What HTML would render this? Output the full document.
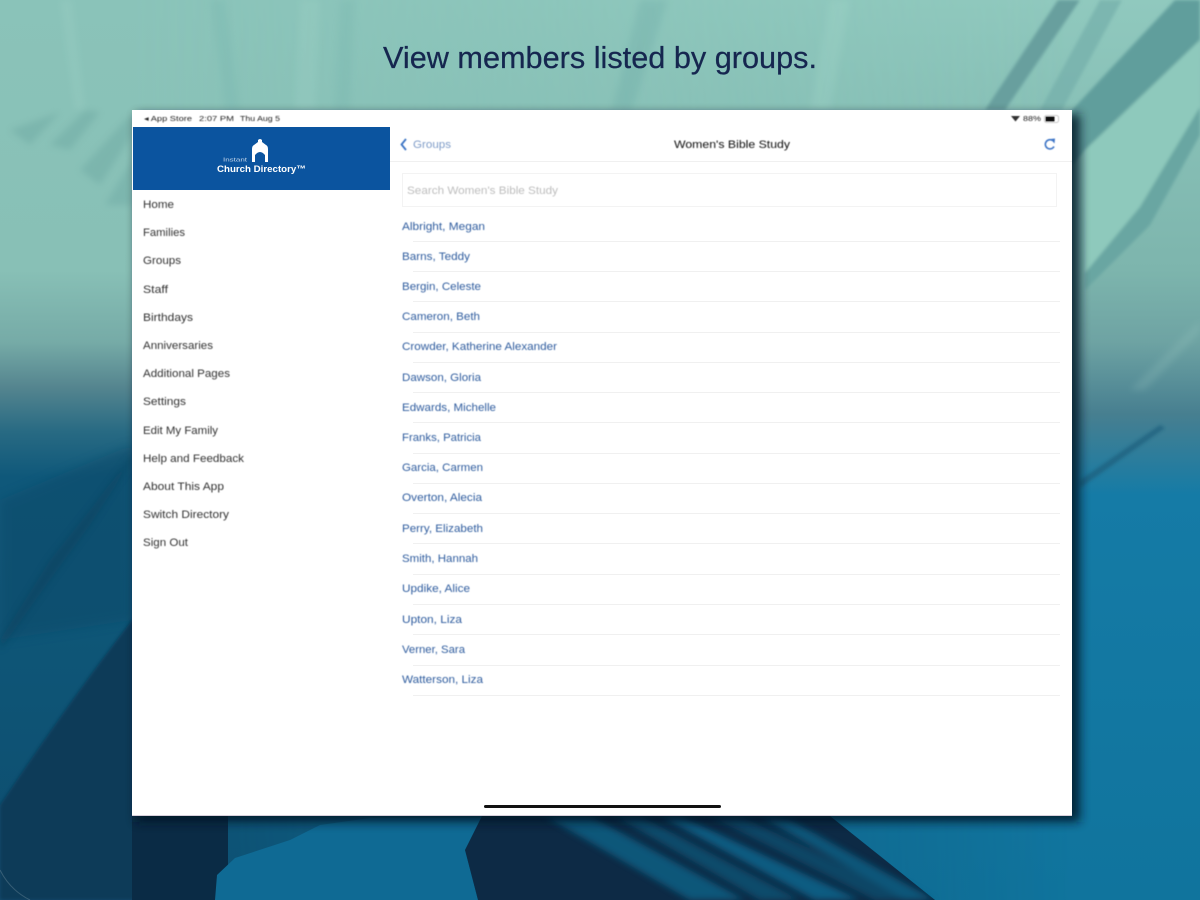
<!DOCTYPE html>
<html>
<head>
<meta charset="utf-8">
<style>
html,body{margin:0;padding:0;width:1200px;height:900px;overflow:hidden;background:#0f6a92}
svg{display:block}
text{font-family:"Liberation Sans",sans-serif}
</style>
</head>
<body>
<svg width="1200" height="900" viewBox="0 0 1200 900" xmlns="http://www.w3.org/2000/svg">
<defs>
<linearGradient id="bgL" x1="0" y1="0" x2="0" y2="1">
<stop offset="0" stop-color="#8ac3b9"/>
<stop offset=".3" stop-color="#88c0b6"/>
<stop offset=".38" stop-color="#76aba7"/>
<stop offset=".43" stop-color="#55858f"/>
<stop offset=".48" stop-color="#286a83"/>
<stop offset=".53" stop-color="#0f587a"/>
<stop offset=".7" stop-color="#0e5677"/>
<stop offset="1" stop-color="#0d4d6f"/>
</linearGradient>
<linearGradient id="bgR" x1="0" y1="0" x2="0" y2="1">
<stop offset="0" stop-color="#90c9be"/>
<stop offset=".3" stop-color="#7db5ad"/>
<stop offset=".38" stop-color="#6ea3a3"/>
<stop offset=".46" stop-color="#477f90"/>
<stop offset=".55" stop-color="#157ba6"/>
<stop offset="1" stop-color="#10749d"/>
</linearGradient>
<linearGradient id="hz">
<stop offset="0" stop-color="#fff"/>
<stop offset=".11" stop-color="#fff"/>
<stop offset=".89" stop-color="#000"/>
<stop offset="1" stop-color="#000"/>
</linearGradient>
<mask id="rightMask"><rect width="1200" height="900" fill="url(#hz)"/></mask>
<filter id="b1" x="-30%" y="-30%" width="160%" height="160%"><feGaussianBlur stdDeviation="1.5"/></filter>
<filter id="b3" x="-30%" y="-30%" width="160%" height="160%"><feGaussianBlur stdDeviation="3.5"/></filter>
<filter id="b5" x="-30%" y="-30%" width="160%" height="160%"><feGaussianBlur stdDeviation="5"/></filter>
<filter id="t" x="-5%" y="-30%" width="110%" height="160%"><feGaussianBlur stdDeviation="0.5"/></filter>
<filter id="t2" x="-5%" y="-30%" width="110%" height="160%"><feGaussianBlur stdDeviation="0.3"/></filter>
</defs>

<!-- background -->
<rect width="1200" height="900" fill="url(#bgR)"/>
<rect width="1200" height="900" fill="url(#bgL)" mask="url(#rightMask)"/>

<!-- vertical streaks, top -->
<g filter="url(#b3)" opacity=".22">
<path d="M60 0L75 110L85 110L72 0Z" fill="#a5d5ca"/>
<path d="M210 0L225 110L240 110L225 0Z" fill="#6fb0aa"/>
<path d="M300 0L295 110L315 110L320 0Z" fill="#a5d5ca"/>
<path d="M340 0L335 110L350 110L355 0Z" fill="#6fb0aa"/>
<path d="M640 0L612 110L632 110L668 0Z" fill="#5f9f9e"/>
<path d="M830 0L810 110L830 110L850 0Z" fill="#a8dbce"/>
</g>
<!-- diagonal strokes, top right -->
<g filter="url(#b1)">
<path d="M1058 0L985 110L1005 110L1080 0Z" fill="#679f9e"/>
<path d="M1100 0L1040 110L1062 110L1122 0Z" fill="#74aeaa" opacity=".7"/>
<path d="M1072 165L1085 150L1200 40L1200 0L1175 0L1072 110Z" fill="#609e9c"/>
<path d="M1085 150L1200 40L1200 107L1140 207L1085 273Z" fill="#8ec9bc"/>
<path d="M1085 273L1140 207L1200 107L1200 135L1150 225L1085 290Z" fill="#69a6a2"/>
</g>
<path d="M1080 480L1160 425L1165 428L1080 488Z" fill="#1f5f7d" opacity=".7" filter="url(#b1)"/>
<path d="M1130 390L1200 320L1200 332L1145 390Z" fill="#a8d4cb" opacity=".18" filter="url(#b3)"/>

<!-- left top diagonal strokes -->
<g filter="url(#b3)" opacity=".4">
<path d="M10 130L60 112L30 145Z" fill="#69a49f"/>
<path d="M50 145L85 110L100 112L70 150Z" fill="#69a49f"/>
<path d="M80 170L130 115L132 135L100 185Z" fill="#69a49f"/>
<path d="M105 205L132 160L132 205Z" fill="#6ba6a1"/>
</g>

<!-- left dark hill + strokes -->
<path d="M0 500L132 445L132 620L0 640Z" fill="#0b4a69" opacity=".5" filter="url(#b5)"/>
<path d="M0 640L50 560L90 510L132 455L132 460L90 525L50 580L0 650Z" fill="#0a3f5c" opacity=".5" filter="url(#b3)"/>
<path d="M0 805Q70 700 132 620L140 620L140 900L0 900Z" fill="#083a58" filter="url(#b1)"/>
<path d="M0 870Q10 890 30 900" fill="none" stroke="#5d7d90" stroke-width="1" opacity=".5"/>

<!-- bottom shapes -->
<rect x="132" y="816" width="96" height="84" fill="#0a2b45"/>
<path d="M215 900L217 875L235 858L290 840L320 825L370 818L482 818L465 850L478 900Z" fill="#0f6a94"/>
<path d="M465 850L482 816L830 816L935 900L478 900Z" fill="#0a2b45" filter="url(#t2)"/>
<g filter="url(#b3)" opacity=".85">
<path d="M590 816L745 900L690 900L545 816Z" fill="#0f5e83"/>
<path d="M640 816L800 900L760 900L615 816Z" fill="#0d5172"/>
<path d="M680 816L860 900L815 900L660 816Z" fill="#10658c"/>
<path d="M740 816L915 900L875 900L710 816Z" fill="#0c4c6c"/>
<path d="M790 820L935 900L905 900L760 816Z" fill="#0f5e83"/>
</g>

<!-- panel shadow -->
<rect x="136" y="114" width="944" height="708" fill="#021526" opacity=".85" filter="url(#b5)"/>

<!-- panel -->
<rect x="132" y="110" width="940" height="706" fill="#fff"/>
<line x1="132" y1="815.5" x2="1072" y2="815.5" stroke="#d8d0dc"/>

<!-- left nav header -->
<rect x="133" y="127" width="257" height="63" fill="#0b549f"/>
<g fill="#fff" filter="url(#t2)">
<path d="M252 162V149Q252 146 254 145L258 142L258 140Q260 138 262 140L262 142L266 145Q268 146 268 149V162H265V155Q260 149 255 155V162Z"/>
</g>
<text x="223" y="161.5" font-size="5.5" fill="#c5d6ea" textLength="24" lengthAdjust="spacingAndGlyphs" filter="url(#t2)">Instant</text>
<text x="217" y="172" font-size="9.5" font-weight="700" fill="#fff" textLength="89" lengthAdjust="spacingAndGlyphs" filter="url(#t2)">Church Directory™</text>

<g filter="url(#t)">
<!-- status bar -->
<g font-size="7.5" fill="#222">
<text x="144" y="121" textLength="48" lengthAdjust="spacingAndGlyphs">◂ App Store</text>
<text x="199" y="121" textLength="35" lengthAdjust="spacingAndGlyphs">2:07 PM</text>
<text x="240" y="121" textLength="40" lengthAdjust="spacingAndGlyphs">Thu Aug 5</text>
<text x="1023" y="121" textLength="18" lengthAdjust="spacingAndGlyphs">88%</text>
</g>
<path d="M1011 116H1020L1015.5 121.5Z" fill="#333"/>
<rect x="1044.5" y="115.5" width="14" height="7" rx="2" fill="none" stroke="#bbb" stroke-width=".8"/>
<rect x="1045.5" y="116.5" width="9" height="5" fill="#111"/>

<!-- nav list -->
<g font-size="11" fill="#333">
<text x="143" y="208" textLength="31" lengthAdjust="spacingAndGlyphs">Home</text>
<text x="143" y="236" textLength="42" lengthAdjust="spacingAndGlyphs">Families</text>
<text x="143" y="264" textLength="38" lengthAdjust="spacingAndGlyphs">Groups</text>
<text x="143" y="293" textLength="25" lengthAdjust="spacingAndGlyphs">Staff</text>
<text x="143" y="321" textLength="50" lengthAdjust="spacingAndGlyphs">Birthdays</text>
<text x="143" y="349" textLength="70" lengthAdjust="spacingAndGlyphs">Anniversaries</text>
<text x="143" y="377" textLength="87" lengthAdjust="spacingAndGlyphs">Additional Pages</text>
<text x="143" y="405" textLength="43" lengthAdjust="spacingAndGlyphs">Settings</text>
<text x="143" y="434" textLength="75" lengthAdjust="spacingAndGlyphs">Edit My Family</text>
<text x="143" y="462" textLength="101" lengthAdjust="spacingAndGlyphs">Help and Feedback</text>
<text x="143" y="490" textLength="81" lengthAdjust="spacingAndGlyphs">About This App</text>
<text x="143" y="518" textLength="86" lengthAdjust="spacingAndGlyphs">Switch Directory</text>
<text x="143" y="546" textLength="45" lengthAdjust="spacingAndGlyphs">Sign Out</text>
</g>

<!-- nav bar -->
<path d="M406 139L401.5 144.5L406 150" fill="none" stroke="#3b73c4" stroke-width="1.8"/>
<text x="413" y="148" font-size="11" fill="#7f9cc8" textLength="38" lengthAdjust="spacingAndGlyphs">Groups</text>
<text x="674" y="148" font-size="11" fill="#111" textLength="116" lengthAdjust="spacingAndGlyphs">Women's Bible Study</text>
<path d="M1052.5 140.5A4.6 4.6 0 1 0 1054 146.5" fill="none" stroke="#3d74c6" stroke-width="1.6"/>
<path d="M1050.5 139L1055 138.5L1054.5 143.5Z" fill="#3d74c6"/>

<!-- search -->
<text x="407" y="194" font-size="11" fill="#bdbdbd" textLength="151" lengthAdjust="spacingAndGlyphs">Search Women's Bible Study</text>

<!-- member list -->
<g font-size="11" fill="#2f5c9e">
<text x="402" y="230" textLength="83" lengthAdjust="spacingAndGlyphs">Albright, Megan</text>
<text x="402" y="260" textLength="68" lengthAdjust="spacingAndGlyphs">Barns, Teddy</text>
<text x="402" y="290" textLength="79" lengthAdjust="spacingAndGlyphs">Bergin, Celeste</text>
<text x="402" y="320" textLength="78" lengthAdjust="spacingAndGlyphs">Cameron, Beth</text>
<text x="402" y="350" textLength="155" lengthAdjust="spacingAndGlyphs">Crowder, Katherine Alexander</text>
<text x="402" y="381" textLength="79" lengthAdjust="spacingAndGlyphs">Dawson, Gloria</text>
<text x="402" y="411" textLength="94" lengthAdjust="spacingAndGlyphs">Edwards, Michelle</text>
<text x="402" y="441" textLength="79" lengthAdjust="spacingAndGlyphs">Franks, Patricia</text>
<text x="402" y="471" textLength="81" lengthAdjust="spacingAndGlyphs">Garcia, Carmen</text>
<text x="402" y="501" textLength="80" lengthAdjust="spacingAndGlyphs">Overton, Alecia</text>
<text x="402" y="532" textLength="81" lengthAdjust="spacingAndGlyphs">Perry, Elizabeth</text>
<text x="402" y="562" textLength="76" lengthAdjust="spacingAndGlyphs">Smith, Hannah</text>
<text x="402" y="592" textLength="68" lengthAdjust="spacingAndGlyphs">Updike, Alice</text>
<text x="402" y="623" textLength="60" lengthAdjust="spacingAndGlyphs">Upton, Liza</text>
<text x="402" y="653" textLength="63" lengthAdjust="spacingAndGlyphs">Verner, Sara</text>
<text x="402" y="683" textLength="81" lengthAdjust="spacingAndGlyphs">Watterson, Liza</text>
</g>
</g>

<!-- dividers -->
<line x1="390" y1="161.5" x2="1072" y2="161.5" stroke="#f0f0f0"/>
<rect x="402.5" y="173.5" width="654" height="33" fill="none" stroke="#f3f3f3"/>
<g stroke="#f0f0f0">
<line x1="413" y1="241.5" x2="1060" y2="241.5"/>
<line x1="413" y1="271.5" x2="1060" y2="271.5"/>
<line x1="413" y1="301.5" x2="1060" y2="301.5"/>
<line x1="413" y1="332.5" x2="1060" y2="332.5"/>
<line x1="413" y1="362.5" x2="1060" y2="362.5"/>
<line x1="413" y1="392.5" x2="1060" y2="392.5"/>
<line x1="413" y1="422.5" x2="1060" y2="422.5"/>
<line x1="413" y1="453.5" x2="1060" y2="453.5"/>
<line x1="413" y1="483.5" x2="1060" y2="483.5"/>
<line x1="413" y1="513.5" x2="1060" y2="513.5"/>
<line x1="413" y1="543.5" x2="1060" y2="543.5"/>
<line x1="413" y1="574.5" x2="1060" y2="574.5"/>
<line x1="413" y1="604.5" x2="1060" y2="604.5"/>
<line x1="413" y1="634.5" x2="1060" y2="634.5"/>
<line x1="413" y1="665.5" x2="1060" y2="665.5"/>
<line x1="413" y1="695.5" x2="1060" y2="695.5"/>
</g>

<!-- home indicator -->
<rect x="484" y="805" width="237" height="3" rx="1.5" fill="#111"/>

<!-- title -->
<text x="383" y="68" font-size="31" fill="#14264f" stroke="#14264f" stroke-width=".25" textLength="434" lengthAdjust="spacingAndGlyphs" filter="url(#t2)">View members listed by groups.</text>
</svg>
</body>
</html>
